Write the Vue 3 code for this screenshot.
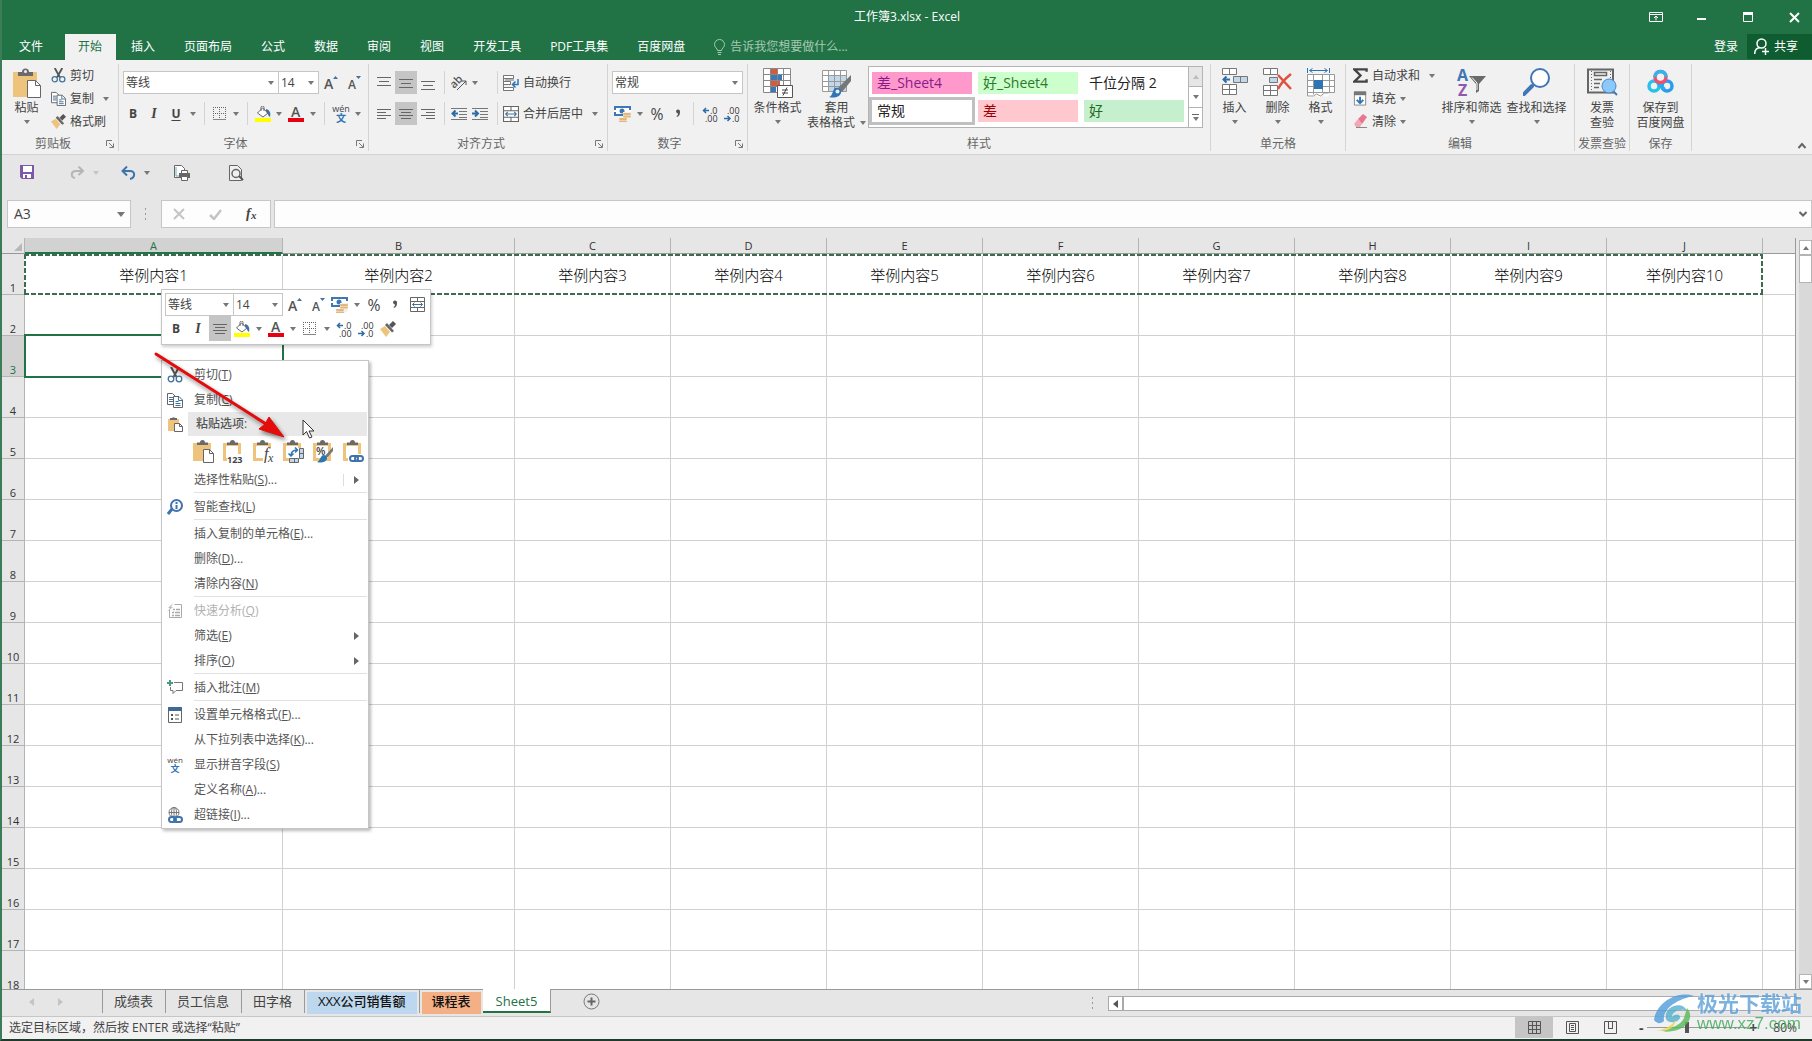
<script setup>
import { h } from 'vue'

const Ico = (props) =>
  h('svg', { width: props.w, height: props.h ?? props.w, 'aria-hidden': 'true', style: { display: 'block', flex: 'none' } }, [
    h('use', { href: '#' + props.n }),
  ])
Ico.props = ['n', 'w', 'h']

const tabs = ['文件', '开始', '插入', '页面布局', '公式', '数据', '审阅', '视图', '开发工具', 'PDF工具集', '百度网盘']
const columns = ['A', 'B', 'C', 'D', 'E', 'F', 'G', 'H', 'I', 'J']
const rows = Array.from({ length: 18 }, (_, i) => i + 1)

const styles = [
  { label: '差_Sheet4', cls: 'pink' },
  { label: '好_Sheet4', cls: 'lime' },
  { label: '千位分隔 2', cls: '' },
  { label: '常规', cls: 'current' },
  { label: '差', cls: 'bad' },
  { label: '好', cls: 'good' },
]

const menuTop = [
  { icon: 'cut', text: '剪切', key: 'T' },
  { icon: 'copy', text: '复制', key: 'C' },
]
const pasteOptions = [
  { n: 'p-all', label: '粘贴' },
  { n: 'p-val', label: '值' },
  { n: 'p-fx', label: '公式' },
  { n: 'p-trans', label: '转置' },
  { n: 'p-fmt', label: '格式' },
  { n: 'p-link', label: '粘贴链接' },
]
const menuRest = [
  { text: '选择性粘贴', key: 'S', dots: true, sub: true, split: true },
  { line: true },
  { icon: 'lookup', text: '智能查找', key: 'L' },
  { line: true },
  { text: '插入复制的单元格', key: 'E', dots: true },
  { text: '删除', key: 'D', dots: true },
  { text: '清除内容', key: 'N' },
  { line: true },
  { icon: 'quick', text: '快速分析', key: 'Q', off: true },
  { text: '筛选', key: 'E', sub: true },
  { text: '排序', key: 'O', sub: true },
  { line: true },
  { icon: 'comment', text: '插入批注', key: 'M' },
  { line: true },
  { icon: 'format', text: '设置单元格格式', key: 'F', dots: true },
  { text: '从下拉列表中选择', key: 'K', dots: true },
  { icon: 'wen', text: '显示拼音字段', key: 'S' },
  { text: '定义名称', key: 'A', dots: true },
  { icon: 'link', text: '超链接', key: 'I', dots: true },
]
</script>

<template>
  <div class="app">
    <svg class="defs" width="0" height="0" aria-hidden="true">
      <symbol id="paste" viewBox="0 0 28 30">
        <path d="M0 4h24v25H0z" fill="#eec37c" />
        <path d="M5 8V4h4a3.500 3.500 0 0 1 7 0h4v4z" fill="#6a6a6a" />
        <circle cx="12.500" cy="3.500" r="1.500" fill="#f1f1f1" />
        <path d="M14.500 12.500h8l5 5v12h-13z" fill="#fff" stroke="#666" />
        <path d="M22.500 12.500v5h5" fill="none" stroke="#666" />
      </symbol>
      <symbol id="cut" viewBox="0 0 16 16">
        <path d="M4 0l5.500 10M12 0L6.500 10" stroke="#555" stroke-width="2" fill="none" />
        <circle cx="4" cy="12" r="2.800" fill="none" stroke="#41719c" stroke-width="1.300" />
        <circle cx="12" cy="12" r="2.800" fill="none" stroke="#41719c" stroke-width="1.300" />
      </symbol>
      <symbol id="copy" viewBox="0 0 16 16">
        <path d="M.500 1.500h5l3 3v8h-8z" fill="#fff" stroke="#666" />
        <path d="M2 5.500h4M2 7.500h4M2 9.500h4" stroke="#41719c" />
        <path d="M6.500 4.500h5.500l3.500 3.500v7.500h-9z" fill="#fff" stroke="#666" />
        <path d="M11.500 4.500v4h4M8.500 9.500h3M8.500 11.500h5M8.500 13.500h5" fill="none" stroke="#41719c" />
      </symbol>
      <symbol id="brush" viewBox="0 0 16 16">
        <path d="M0 8l5-3 5 6-4 5z" fill="#eec37c" />
        <path d="M5 4l2-2 7 8-2 1.500z" fill="#666" />
        <path d="M9 4l4-4 3 3-4 4z" fill="#555" />
      </symbol>
      <symbol id="grow" viewBox="0 0 16 16">
        <text x="1" y="14" font-size="14" class="gl">A</text>
        <path d="M10 4l2.500-3L15 4z" fill="#41719c" />
      </symbol>
      <symbol id="shrink" viewBox="0 0 16 16">
        <text x="2" y="14" font-size="12" class="gl">A</text>
        <path d="M10 1h5l-2.500 3z" fill="#41719c" />
      </symbol>
      <symbol id="border" viewBox="0 0 14 14">
        <path d="M.500 0v13M6.500 0v13M12.500 0v13M0 .500h13M0 6.500h13" stroke="#666" stroke-dasharray="1 1" fill="none" />
        <path d="M0 12.500h13" stroke="#888" />
      </symbol>
      <symbol id="fill" viewBox="0 0 16 16">
        <path d="M2.500 7l5-5 5.500 5-5 4z" fill="#fff" stroke="#666" />
        <path d="M6 5V1.500a1.500 1.500 0 0 1 3 0V5" fill="none" stroke="#666" />
        <path d="M11 3c4 1 5 4 4 8-2-1-2-4-4-5z" fill="#41719c" />
        <path d="M0 12h16v4H0z" fill="#ff0" />
      </symbol>
      <symbol id="color" viewBox="0 0 16 16">
        <text x="3" y="11" font-size="14" class="gl">A</text>
        <path d="M0 12h16v4H0z" fill="#e60012" />
      </symbol>
      <symbol id="wen" viewBox="0 0 16 16">
        <text x="8" y="6" text-anchor="middle" font-size="8" fill="#444">wén</text>
        <text x="8" y="15" text-anchor="middle" font-size="9" font-weight="700" fill="#2e75b6">文</text>
      </symbol>
      <symbol id="a-top" viewBox="0 0 14 14"><path d="M0 1.500h14M2 5.500h10M0 9.500h14" stroke="#666" /></symbol>
      <symbol id="a-mid" viewBox="0 0 14 14"><path d="M0 3.500h14M2 7.500h10M0 11.500h14" stroke="#666" /></symbol>
      <symbol id="a-bot" viewBox="0 0 14 14"><path d="M0 5.500h14M2 9.500h10M0 13.500h14" stroke="#666" /></symbol>
      <symbol id="a-left" viewBox="0 0 14 14"><path d="M0 2.500h14M0 5.500h9M0 8.500h14M0 11.500h9" stroke="#666" /></symbol>
      <symbol id="a-center" viewBox="0 0 14 14"><path d="M0 2.500h14M2 5.500h10M0 8.500h14M2 11.500h10" stroke="#666" /></symbol>
      <symbol id="a-right" viewBox="0 0 14 14"><path d="M0 2.500h14M5 5.500h9M0 8.500h14M5 11.500h9" stroke="#666" /></symbol>
      <symbol id="orient" viewBox="0 0 16 16">
        <text x="0" y="11" font-size="11" font-weight="600" fill="#555" transform="rotate(-45 5 9)">ab</text>
        <path d="M6 15l9-9M15 10V6h-4" fill="none" stroke="#555" />
      </symbol>
      <symbol id="outdent" viewBox="0 0 16 14">
        <path d="M0 1.500h16M8 4.500h8M8 7.500h8M8 10.500h8M0 12.500h16" stroke="#777" />
        <path d="M7 6.500H2M4.500 3.500l-3 3 3 3" stroke="#2e6ca8" stroke-width="2" fill="none" />
      </symbol>
      <symbol id="indent" viewBox="0 0 16 14">
        <path d="M0 1.500h16M8 4.500h8M8 7.500h8M8 10.500h8M0 12.500h16" stroke="#777" />
        <path d="M0 6.500h5M3 3.500l3 3-3 3" stroke="#2e6ca8" stroke-width="2" fill="none" />
      </symbol>
      <symbol id="wrap" viewBox="0 0 16 16">
        <path d="M.500.500h10v3H.500zM.500 6.500h7v3h-7zM.500 12.500h10v3H.500z" fill="#fff" stroke="#777" />
        <path d="M.500.500v15M2 5h9" stroke="#777" fill="none" />
        <path d="M15 4v5.500H10M12.500 6.500l-3 3 3 3" stroke="#2e75b6" fill="none" stroke-width="1.500" />
      </symbol>
      <symbol id="merge" viewBox="0 0 15 15">
        <path d="M.500.500h14v14H.500zM.500 4.500h14M.500 10.500h14M7.500.500v4M7.500 10.500v4" fill="#fff" stroke="#666" />
        <path d="M2.500 7.500h10M4.500 5.500l-2 2 2 2M10.500 5.500l2 2-2 2" stroke="#41719c" fill="none" />
      </symbol>
      <symbol id="money" viewBox="0 0 18 16">
        <path d="M1 1h15v8H1z" fill="#fff" stroke="#3f77b5" stroke-width="2" />
        <path d="M0 4h2v2H0zM15 4h2v2h-2z" fill="#fff" />
        <circle cx="8" cy="5" r="2.500" fill="#3f77b5" />
        <path d="M9 6h8v8l-4 2H5v-4h4z" fill="#f1f1f1" />
        <path d="M10 8h6M10 10.500h6M6 13h6M6 15.500h6" stroke="#e3b77c" stroke-width="2" stroke-linecap="round" />
      </symbol>
      <symbol id="pct" viewBox="0 0 16 16"><text x="8" y="13" text-anchor="middle" font-size="14" fill="#444">%</text></symbol>
      <symbol id="comma" viewBox="0 0 16 16"><path d="M6 5a2 2 0 1 1 4 1c0 3-1 4-3 5l-.500-1c1-.500 1.500-1 1.500-2.500C7 7.500 6 6.500 6 5z" fill="#555" /></symbol>
      <symbol id="dec-inc" viewBox="0 0 16 16">
        <path d="M7 4.500H1.500M4 2L1.500 4.500 4 7" stroke="#2e6ca8" stroke-width="1.500" fill="none" />
        <text x="8" y="8" font-size="9" fill="#333">.0</text>
        <text x="3" y="16" font-size="9" fill="#333">.00</text>
      </symbol>
      <symbol id="dec-dec" viewBox="0 0 16 16">
        <text x="3" y="8" font-size="9" fill="#333">.00</text>
        <path d="M0 12.500h6M3.500 10L6 12.500 3.500 15" stroke="#2e6ca8" stroke-width="1.500" fill="none" />
        <text x="8" y="16" font-size="9" fill="#333">.0</text>
      </symbol>
      <symbol id="cond" viewBox="0 0 30 30">
        <path d="M.500.500h27v24H.500z" fill="#fff" />
        <path d="M8 1h6v5H8zM8 13h9v6H8z" fill="#d9593d" />
        <path d="M8 7h11v5H8zM8 19h5v6H8z" fill="#3c78b4" />
        <path d="M.500.500h27v24H.500zM.500 6.500h27M.500 12.500h27M.500 18.500h27M7.500.500v24M14.500.500v24M20.500.500v24" fill="none" stroke="#888" />
        <path d="M14.500 17.500h15v12h-15z" fill="#fff" stroke="#555" />
        <path d="M19 22h6M19 25h6M24 19.500l-4 8" stroke="#444" />
      </symbol>
      <symbol id="tablefmt" viewBox="0 0 30 30">
        <path d="M.500 2.500h24v21H.500z" fill="#fff" />
        <path d="M6 8h19v16H6z" fill="#c3d7ea" />
        <path d="M.500 2.500h24v21H.500zM.500 7.500h24M.500 13.500h24M.500 18.500h24M6.500 2.500v21M12.500 2.500v21M18.500 2.500v21" fill="none" stroke="#999" />
        <path d="M29 7v6l-9 11-4-4z" fill="#777" />
        <path d="M13 20c4-1 7 2 6 5-2 5-8 5-12 4 4-1 3-6 6-9z" fill="#2e75b6" />
        <circle cx="15.500" cy="23.500" r="2" fill="#e8f1f9" />
      </symbol>
      <symbol id="ins" viewBox="0 0 28 28">
        <path d="M1.500.500h14v6h-14zM8.500.500v6M1.500 16.500h14v10h-14zM8.500 16.500v10M1.500 21.500h14" fill="#fff" stroke="#777" />
        <path d="M12.500 8.500h14v6h-14z" fill="#c3d7ea" stroke="#777" /><path d="M19.500 8.500v6" stroke="#777" />
        <path d="M9 11.500H3M5.500 8.500l-3 3 3 3" stroke="#2e6ca8" stroke-width="2" fill="none" />
      </symbol>
      <symbol id="del" viewBox="0 0 30 28">
        <path d="M.500.500h14v6H.500zM7.500.500v6M.500 17.500h14v10H.500zM7.500 17.500v10M.500 22.500h14" fill="#fff" stroke="#777" />
        <path d="M6.500 9.500h8v5h-8z" fill="#c3d7ea" stroke="#777" />
        <path d="M15 7l13 14M28 6C23 10 18 15 15 21" stroke="#e0523f" stroke-width="2.500" fill="none" />
      </symbol>
      <symbol id="fmt" viewBox="0 0 28 30">
        <path d="M.500 0v5M22.500 0v5M3 2.500h17M5.500.500l-3 2 3 2M17.500.500l3 2-3 2" stroke="#2e75b6" fill="none" />
        <path d="M.500 6.500h27v18H23l-2 4h-4l-1-2-3 3-4-2-4 2H.500z" fill="#fff" />
        <path d="M6.500 6.500v20M15.500 6.500v18M22.500 6.500v18M.500 12.500h27M.500 18.500h27M.500 24.500h27M.500 6.500h27v18M.500 6.500V28h6l3-2 4 2 4-3h4" fill="none" stroke="#999" />
        <path d="M7 12h9v9H7z" fill="#2e75b6" />
      </symbol>
      <symbol id="sigma" viewBox="0 0 16 16"><path d="M14.500 4V1.500h-13L8 8l-6.500 6.500h13V12" fill="none" stroke="#444" stroke-width="2.500" /></symbol>
      <symbol id="filldn" viewBox="0 0 15 16">
        <path d="M1 1h12v14H1z" fill="#fff" stroke="#888" /><path d="M.500.500h13v4H.500z" fill="#777" />
        <path d="M7 6v7M3.500 9.500L7 13l3.500-3.500" stroke="#2e75b6" stroke-width="2" fill="none" />
      </symbol>
      <symbol id="eraser" viewBox="0 0 15 15">
        <path d="M5 5l5-5 4 3-5 7z" fill="#e8768d" /><path d="M5 5l4 5-2 3H3L1 10z" fill="#f3a7b6" /><path d="M3 13.500h11" stroke="#888" />
      </symbol>
      <symbol id="sort" viewBox="0 0 30 30">
        <text x="0" y="13" font-size="16" font-weight="700" fill="#3f77b5">A</text>
        <text x="1" y="28" font-size="16" font-weight="700" fill="#9157b0">Z</text>
        <path d="M12 8h17l-7 8v7l-3 2v-9z" fill="#6a6a6a" /><path d="M15 9.500l5 5.500v7" fill="none" stroke="#fff" />
      </symbol>
      <symbol id="find" viewBox="0 0 28 28">
        <path d="M9 18l-8 8" stroke="#3f77b5" stroke-width="4" stroke-linecap="round" />
        <circle cx="17" cy="10" r="9" fill="#fff" stroke="#3f77b5" stroke-width="2" />
      </symbol>
      <symbol id="invoice" viewBox="0 0 31 28">
        <path d="M1 1.500h25v23H1z" fill="#f1f1f1" stroke="#666" stroke-width="2" />
        <path d="M4.500 3v20M23.500 3v14" stroke="#666" stroke-dasharray="1 2" />
        <path d="M7.500 4.500h12v3h-12zM7 11.500h8M7 15.500h6M7 19.500h5" fill="none" stroke="#666" stroke-width="1.500" />
        <path d="M26 23l4 4" stroke="#3f77b5" stroke-width="2" /><circle cx="22" cy="18" r="7" fill="#8cc8fa" stroke="#4a88c7" />
      </symbol>
      <symbol id="baidu" viewBox="0 0 28 26">
        <g fill="none" stroke-width="3.500">
          <circle cx="7" cy="18" r="5" stroke="#27c1ea" /><circle cx="20" cy="18" r="5" stroke="#279df0" />
          <path d="M10.500 14.500l7 7" stroke="#27aeea" /><circle cx="13.500" cy="9" r="5.500" stroke="#f0506e" />
          <path d="M8 9a5.500 5.500 0 0 1 11 0" stroke="#2fb6ee" />
        </g>
      </symbol>
      <symbol id="save" viewBox="0 0 15 15">
        <path d="M0 0h14v14H2l-2-2z" fill="#7d57a8" /><path d="M3 1h9v6H3zM3 9h8v4H3z" fill="#fff" /><path d="M5 10h2v3H5z" fill="#7d57a8" />
      </symbol>
      <symbol id="undo" viewBox="0 0 15 14"><path d="M1 5h8c6 0 5 7 0 8M6 .500L1.500 5 6 9.500" fill="none" stroke="#3f73ad" stroke-width="2" /></symbol>
      <symbol id="redo" viewBox="0 0 15 14"><path d="M13 5H6C0 5 1 12 5 12M8.500.500L13 5 8.500 9" fill="none" stroke="#b5b5b5" stroke-width="2" /></symbol>
      <symbol id="qprint" viewBox="0 0 17 16">
        <path d="M.500.500h7l3 3v9h-10z" fill="#fff" stroke="#666" /><path d="M2 2v9h3" stroke="#7ab" fill="none" />
        <path d="M5 8h11v5H5z" fill="#666" /><path d="M7.500 5.500h6v3h-6zM7.500 11.500h6v4h-6z" fill="#fff" stroke="#666" />
      </symbol>
      <symbol id="preview" viewBox="0 0 15 16">
        <path d="M.500.500h8l4 4v11h-12z" fill="#f1f1f1" stroke="#666" /><circle cx="7" cy="8.500" r="4" fill="none" stroke="#666" stroke-width="1.500" /><path d="M10 11l4 4" stroke="#555" stroke-width="2" />
      </symbol>
      <symbol id="launch" viewBox="0 0 8 8"><path d="M.500 6V.500H6M3 3l4 4M7.500 3.500v4h-4" fill="none" stroke="#777" /></symbol>
      <symbol id="bulb" viewBox="0 0 11 16"><path d="M3.500 11.500c0-2-3-3-3-6a5 5 0 0 1 10 0c0 3-3 4-3 6zM3.500 13.500h4M4 15.500h3" fill="none" stroke="#a5c9b3" /></symbol>
      <symbol id="share" viewBox="0 0 16 17"><circle cx="7.500" cy="5.500" r="4.500" fill="none" stroke="#fff" stroke-width="1.500" /><path d="M.700 16c0-4 2-6 5-6.500M8 13.500h7M11.500 10v7" fill="none" stroke="#fff" stroke-width="1.500" /></symbol>
      <symbol id="w-opt" viewBox="0 0 14 10"><path d="M.500.500h13v9H.500zM.500 2.500h13M7 8.500V4M5 6l2-2 2 2" fill="none" stroke="#fff" /></symbol>
      <symbol id="w-min" viewBox="0 0 10 10"><path d="M0 6h9v2H0z" fill="#fff" /></symbol>
      <symbol id="w-max" viewBox="0 0 11 11"><path d="M.500.500h9v9h-9z" fill="none" stroke="#fff" /><path d="M0 0h10v3H0z" fill="#fff" /></symbol>
      <symbol id="w-close" viewBox="0 0 11 11"><path d="M1 1l9 9M10 1l-9 9" stroke="#fff" stroke-width="2" /></symbol>
      <symbol id="chev-up" viewBox="0 0 10 7"><path d="M1.500 6L5 2l3.500 4" fill="none" stroke="#666" stroke-width="2" /></symbol>
      <symbol id="chev-dn" viewBox="0 0 8 6"><path d="M.500 1L4 4.500 7.500 1" fill="none" stroke="#666" stroke-width="2" /></symbol>
      <symbol id="x" viewBox="0 0 12 12"><path d="M1 1l10 10M11 1L1 11" stroke="#c4c4c4" stroke-width="2" /></symbol>
      <symbol id="check" viewBox="0 0 13 11"><path d="M1 6l4 4 7-9" fill="none" stroke="#c4c4c4" stroke-width="2.500" /></symbol>
      <symbol id="fx" viewBox="0 0 14 14"><text x="1" y="11" font-size="14" class="fxt">f</text><text x="6" y="12" font-size="11" class="fxt">x</text></symbol>

      <symbol id="clip" viewBox="0 0 22 23">
        <path d="M1.500 4.500h15v15h-15z" fill="#fff" stroke="#eec37c" stroke-width="3" />
        <path d="M4 5V2.500h3a2.500 2.500 0 0 1 5 0h3V5z" fill="#6a6a6a" />
      </symbol>
      <symbol id="p-small" viewBox="0 0 16 16">
        <path d="M1 3h11v12H1z" fill="#eec37c" /><path d="M3 4V2h2a2 2 0 0 1 3 0h2v2z" fill="#6a6a6a" />
        <path d="M7.500 7.500h5l3 3v5h-8z" fill="#fff" stroke="#666" /><path d="M12.500 7.500v3h3" fill="none" stroke="#666" />
      </symbol>
      <symbol id="p-all" viewBox="0 0 22 23">
        <path d="M0 3h18v18H0z" fill="#eec37c" /><path d="M4 5V2.500h3a2.500 2.500 0 0 1 5 0h3V5z" fill="#6a6a6a" />
        <path d="M10.500 9.500h6l4 4v9h-10z" fill="#fff" stroke="#666" /><path d="M16.500 9.500v4h4" fill="none" stroke="#666" />
      </symbol>
      <symbol id="p-val" viewBox="0 0 22 23">
        <use href="#clip" width="22" height="23" /><path d="M4 14h18v9H4z" fill="#fff" />
        <text x="4" y="23" font-size="9" font-weight="700" fill="#444">123</text>
      </symbol>
      <symbol id="p-fx" viewBox="0 0 22 23">
        <use href="#clip" width="22" height="23" /><path d="M10 8h12v15H10z" fill="#fff" />
        <text x="11" y="19" font-size="16" class="fxt thin">f</text><text x="15" y="22" font-size="12" class="fxt thin">x</text>
      </symbol>
      <symbol id="p-trans" viewBox="0 0 22 23">
        <use href="#clip" width="22" height="23" /><path d="M7 8h15v15H7z" fill="#fff" />
        <path d="M16.500 8.500h4v10h-4zM16.500 13.500h4M6.500 18.500h9v4h-9zM11.500 18.500v4" fill="#c3d7ea" stroke="#666" />
        <path d="M8 16c0-4 2-6 6-6M12 7.500l2.500 2.500-2.500 2.500M5.500 13.500L8 16l2.500-2.500" fill="none" stroke="#2e75b6" stroke-width="1.500" />
      </symbol>
      <symbol id="p-fmt" viewBox="0 0 22 23">
        <use href="#clip" width="22" height="23" /><text x="3" y="15" font-size="11" font-weight="600" fill="#444">%</text>
        <path d="M20 7v4l-7 8-2-2z" fill="#777" /><path d="M10 15c3 0 4 2 4 4-2 4-6 4-10 3 3-1 3-5 6-7z" fill="#2e75b6" />
      </symbol>
      <symbol id="p-link" viewBox="0 0 22 23">
        <use href="#clip" width="22" height="23" /><path d="M5 14h17v9H5z" fill="#fff" />
        <g fill="none" stroke="#3f73ad" stroke-width="2"><rect x="7" y="16" width="8" height="5" rx="2.500" /><rect x="12" y="16" width="8" height="5" rx="2.500" /></g>
      </symbol>
      <symbol id="lookup" viewBox="0 0 16 16">
        <path d="M5 10l-4 5" stroke="#3f73ad" stroke-width="3" /><circle cx="9.500" cy="6.500" r="5.500" fill="#fff" stroke="#3f73ad" stroke-width="2" /><path d="M9.500 3v2M9.500 6v4" stroke="#3f73ad" stroke-width="2" />
      </symbol>
      <symbol id="quick" viewBox="0 0 16 16">
        <path d="M2.500 7v7.500h12v-13h-7" fill="none" stroke="#aaa" /><path d="M6 6.500h2M9 6.500h4M5 9.500h2M8 9.500h5M5 12.500h2M8 12.500h5" stroke="#aaa" stroke-width="1.500" /><path d="M6 0L1 5h2L0 9l6-5H4z" fill="#bbb" />
      </symbol>
      <symbol id="comment" viewBox="0 0 16 16">
        <path d="M7 2.500h8.500v8H9l-3 3v-3H3.500V7" fill="none" stroke="#777" /><path d="M3 0v6M0 3h6" stroke="#4a9a7c" stroke-width="2" />
      </symbol>
      <symbol id="format" viewBox="0 0 16 16">
        <path d="M1.500.500h13v15h-13z" fill="#fff" stroke="#666" /><path d="M1 0h14v4H1z" fill="#3f6a98" />
        <path d="M4 7h2v2H4zM4 11h2v2H4z" fill="#555" /><path d="M8 8h4M8 12h4" stroke="#555" />
      </symbol>
      <symbol id="link" viewBox="0 0 16 16">
        <g fill="none" stroke="#777"><circle cx="7" cy="5.500" r="5" /><path d="M2 5.500h10M7 .500v10" /><ellipse cx="7" cy="5.500" rx="2.500" ry="5" /></g>
        <path d="M1 9h15v7H1z" fill="#fff" />
        <g fill="none" stroke="#3f73ad" stroke-width="2"><rect x="2" y="10" width="7" height="5" rx="2.500" /><rect x="7" y="10" width="8" height="5" rx="2.500" /></g>
      </symbol>
      <symbol id="v-grid" viewBox="0 0 13 13"><path d="M.500.500h12v12H.500zM.500 4.500h12M.500 8.500h12M4.500.500v12M8.500.500v12" fill="none" stroke="#555" /></symbol>
      <symbol id="v-page" viewBox="0 0 13 13"><path d="M.500.500h12v12H.500zM3.500 2.500h6v8h-6zM5 4.500h3M5 6.500h3M5 8.500h3" fill="none" stroke="#555" /></symbol>
      <symbol id="v-break" viewBox="0 0 13 13"><path d="M.500.500h12v12H.500zM4.500.500v7M8.500.500v7M4 7.500h5" fill="none" stroke="#555" /></symbol>
      <symbol id="plus" viewBox="0 0 17 17"><circle cx="8.500" cy="8.500" r="7.500" fill="none" stroke="#777" /><path d="M8.500 4.500v8M4.500 8.500h8" stroke="#666" stroke-width="2" /></symbol>
    </svg>

    <header class="title">
      <div class="caption">
        <span></span>
        <h1>工作簿3.xlsx - Excel</h1>
        <div class="win">
          <button aria-label="功能区显示选项"><Ico n="w-opt" w="14" h="10" /></button>
          <button aria-label="最小化"><Ico n="w-min" w="10" /></button>
          <button aria-label="最大化"><Ico n="w-max" w="11" /></button>
          <button aria-label="关闭"><Ico n="w-close" w="11" /></button>
        </div>
      </div>
      <nav class="tabs">
        <button v-for="t in tabs" :key="t" :class="{ on: t === '开始', file: t === '文件' }">{{ t }}</button>
        <label class="tell"><Ico n="bulb" w="11" h="16" /><input type="text" placeholder="告诉我您想要做什么..." /></label>
        <button class="login">登录</button>
        <button class="share"><Ico n="share" w="16" h="17" />共享</button>
      </nav>
    </header>

    <section class="ribbon">
      <div class="group g-clip">
        <div class="body">
          <button class="big w49"><span class="pic"><Ico n="paste" w="28" h="30" /></span>粘贴<i class="caret"></i></button>
          <div class="stack">
            <button><Ico n="cut" w="15" />剪切</button>
            <button><Ico n="copy" w="15" />复制<i class="caret far"></i></button>
            <button><Ico n="brush" w="15" />格式刷</button>
          </div>
        </div>
        <div class="name"><span>剪贴板</span><button aria-label="剪贴板设置"><Ico n="launch" w="8" /></button></div>
      </div>

      <div class="group g-font">
        <div class="body col">
          <div class="line">
            <span class="combo c-font"><select aria-label="字体"><option>等线</option></select><i class="caret"></i></span>
            <span class="combo c-size"><select aria-label="字号"><option>14</option></select><i class="caret"></i></span>
            <button class="b24"><Ico n="grow" w="16" /></button>
            <button class="b22"><Ico n="shrink" w="16" /></button>
          </div>
          <div class="line">
            <button class="b20 bold">B</button><button class="b22 ital">I</button><button class="b22 under">U</button><button class="drop"><i class="caret"></i></button>
            <i class="bar"></i>
            <button class="b20"><Ico n="border" w="14" /></button><button class="drop"><i class="caret"></i></button>
            <i class="bar"></i>
            <button class="b20"><Ico n="fill" w="16" /></button><button class="drop"><i class="caret"></i></button>
            <button class="b22"><Ico n="color" w="16" /></button><button class="drop"><i class="caret"></i></button>
            <i class="bar"></i>
            <button class="b22"><Ico n="wen" w="18" h="18" /></button><button class="drop"><i class="caret"></i></button>
          </div>
        </div>
        <div class="name"><span>字体</span><button aria-label="字体设置"><Ico n="launch" w="8" /></button></div>
      </div>

      <div class="group g-align">
        <div class="body col">
          <div class="line">
            <button class="b22"><Ico n="a-top" w="14" /></button><button class="b22 sel"><Ico n="a-mid" w="14" /></button><button class="b22"><Ico n="a-bot" w="14" /></button>
            <i class="bar"></i>
            <span class="pair"><button class="b20"><Ico n="orient" w="16" /></button><button class="drop"><i class="caret"></i></button></span>
            <i class="bar"></i>
            <button class="wide"><Ico n="wrap" w="16" />自动换行</button>
          </div>
          <div class="line">
            <button class="b22"><Ico n="a-left" w="14" /></button><button class="b22 sel"><Ico n="a-center" w="14" /></button><button class="b22"><Ico n="a-right" w="14" /></button>
            <i class="bar"></i>
            <span class="pair"><button class="b20"><Ico n="outdent" w="16" h="14" /></button><button class="b22"><Ico n="indent" w="16" h="14" /></button></span>
            <i class="bar"></i>
            <button class="wide"><Ico n="merge" w="16" />合并后居中<i class="caret far"></i></button>
          </div>
        </div>
        <div class="name"><span>对齐方式</span><button aria-label="对齐设置"><Ico n="launch" w="8" /></button></div>
      </div>

      <div class="group g-num">
        <div class="body col">
          <div class="line"><span class="combo c-num"><select aria-label="数字格式"><option>常规</option></select><i class="caret"></i></span></div>
          <div class="line">
            <button class="b22"><Ico n="money" w="18" h="16" /></button><button class="drop"><i class="caret"></i></button>
            <button class="b22"><Ico n="pct" w="18" /></button><button class="b20"><Ico n="comma" w="16" /></button>
            <i class="bar"></i>
            <button class="b22"><Ico n="dec-inc" w="16" /></button><button class="b22"><Ico n="dec-dec" w="16" /></button>
          </div>
        </div>
        <div class="name"><span>数字</span><button aria-label="数字设置"><Ico n="launch" w="8" /></button></div>
      </div>

      <div class="group g-style">
        <div class="body">
          <button class="big w59"><span class="pic"><Ico n="cond" w="30" /></span>条件格式<i class="caret"></i></button>
          <button class="big w59"><span class="pic"><Ico n="tablefmt" w="30" /></span>套用<span class="inl">表格格式<i class="caret"></i></span></button>
          <div class="gallery">
            <div class="cells"><button v-for="s in styles" :key="s.label" :class="s.cls">{{ s.label }}</button></div>
            <div class="gscroll">
              <button class="off" aria-label="上一行"><i class="caret up"></i></button>
              <button aria-label="下一行"><i class="caret"></i></button>
              <button aria-label="其他"><i class="more"></i><i class="caret"></i></button>
            </div>
          </div>
        </div>
        <div class="name"><span>样式</span></div>
      </div>

      <div class="group g-cells">
        <div class="body">
          <button class="big w43"><span class="pic"><Ico n="ins" w="28" /></span>插入<i class="caret"></i></button>
          <button class="big w43"><span class="pic"><Ico n="del" w="30" h="28" /></span>删除<i class="caret"></i></button>
          <button class="big w43"><span class="pic"><Ico n="fmt" w="28" h="30" /></span>格式<i class="caret"></i></button>
        </div>
        <div class="name"><span>单元格</span></div>
      </div>

      <div class="group g-edit">
        <div class="body">
          <div class="stack">
            <button><Ico n="sigma" w="15" />自动求和<i class="caret far"></i></button>
            <button><Ico n="filldn" w="15" />填充<i class="caret"></i></button>
            <button><Ico n="eraser" w="15" />清除<i class="caret"></i></button>
          </div>
          <button class="big w65"><span class="pic"><Ico n="sort" w="30" /></span>排序和筛选<i class="caret"></i></button>
          <button class="big w65"><span class="pic"><Ico n="find" w="28" /></span>查找和选择<i class="caret"></i></button>
        </div>
        <div class="name"><span>编辑</span></div>
      </div>

      <div class="group g-inv">
        <div class="body"><button class="big fill"><span class="pic"><Ico n="invoice" w="31" h="28" /></span>发票<span>查验</span></button></div>
        <div class="name"><span>发票查验</span></div>
      </div>
      <div class="group g-save">
        <div class="body"><button class="big fill"><span class="pic"><Ico n="baidu" w="28" h="26" /></span>保存到<span>百度网盘</span></button></div>
        <div class="name"><span>保存</span></div>
      </div>
      <button class="collapse" aria-label="折叠功能区"><Ico n="chev-up" w="10" h="7" /></button>
    </section>

    <div class="quick">
      <button aria-label="保存"><Ico n="save" w="15" /></button>
      <span><button aria-label="恢复"><Ico n="redo" w="15" h="14" /></button><i class="caret pale"></i></span>
      <span><button aria-label="撤消"><Ico n="undo" w="15" h="14" /></button><i class="caret"></i></span>
      <button aria-label="快速打印"><Ico n="qprint" w="17" h="16" /></button>
      <button aria-label="打印预览"><Ico n="preview" w="15" h="16" /></button>
    </div>

    <div class="formula">
      <label class="namebox"><input type="text" value="A3" aria-label="名称框" /><i class="caret big5"></i></label>
      <i class="dots"></i>
      <div class="fxbox">
        <button aria-label="取消"><Ico n="x" w="12" /></button>
        <button aria-label="输入"><Ico n="check" w="13" h="11" /></button>
        <button aria-label="插入函数"><Ico n="fx" w="14" /></button>
      </div>
      <label class="fbar"><input type="text" aria-label="编辑栏" /><Ico n="chev-dn" w="8" h="6" /></label>
    </div>

    <main class="sheet">
      <div class="grid">
        <table>
          <colgroup>
            <col class="k-num" /><col class="k-a" /><col class="k-b" /><col v-for="n in 8" :key="n" class="k-c" /><col />
          </colgroup>
          <thead>
            <tr>
              <th class="corner"><i></i></th>
              <th v-for="c in columns" :key="c" :class="{ act: c === 'A' }">{{ c }}</th>
              <th class="tail"></th>
            </tr>
          </thead>
          <tbody>
            <tr v-for="r in rows" :key="r">
              <th :class="{ act: r === 3 }">{{ r }}</th>
              <td v-for="(c, i) in columns" :key="c">{{ r === 1 ? '举例内容' + (i + 1) : '' }}</td>
              <td></td>
            </tr>
          </tbody>
        </table>
        <div class="ants"></div>
        <div class="picked"></div>
      </div>
      <div class="vscroll">
        <button aria-label="向上滚动"><i class="caret up"></i></button>
        <div class="track"><div class="thumb"></div></div>
        <button aria-label="向下滚动"><i class="caret"></i></button>
      </div>
    </main>

    <div class="sheets">
      <div class="arrows"><i class="tri left"></i><i class="tri right"></i></div>
      <button>成绩表</button><button>员工信息</button><button>田字格</button>
      <button class="hl"><span class="blue">XXX公司销售额</span></button>
      <button class="hl"><span class="orange">课程表</span></button>
      <button class="open">Sheet5</button>
      <button class="add" aria-label="新工作表"><Ico n="plus" w="17" /></button>
      <i class="dots"></i>
      <div class="hscroll"><button aria-label="向左滚动"><i class="tri left dark"></i></button><div></div></div>
    </div>

    <footer class="status">
      <span>选定目标区域，然后按 ENTER 或选择“粘贴”</span>
      <div class="views">
        <button class="sel" aria-label="普通"><Ico n="v-grid" w="13" /></button>
        <button aria-label="页面布局"><Ico n="v-page" w="13" /></button>
        <button aria-label="分页预览"><Ico n="v-break" w="13" /></button>
      </div>
      <div class="zoom">
        <button aria-label="缩小">-</button><input type="range" min="10" max="190" value="80" aria-label="缩放" /><button aria-label="放大">+</button>
        <span>80%</span>
      </div>
    </footer>

    <div class="mark">
      <svg width="42" height="40" viewBox="0 0 42 40" aria-hidden="true">
        <path d="M41 3C24-3 3 10 1 27c3 4 7 4 10 1C9 16 24 6 41 3z" fill="#4f9ddc" />
        <path d="M13 26c-3-13 17-19 21-8-5-3-15 0-15 6 3-4 9-3 8 1-2 5-12 6-14 1z" fill="#55b0d0" />
        <path d="M34 15c8 9 0 21-14 23-6 1-9 1-12-1 10-1 20-5 23-12 1-4 2-6 3-10z" fill="#57b957" />
        <path d="M4 38c9-2 15-6 19-11-1 6-6 12-19 11z" fill="#f1d549" />
      </svg>
      <div><b>极光下载站</b><em>www.xz7.com</em></div>
    </div>

    <div class="mini">
      <div class="line">
        <span class="combo m-font"><select aria-label="浮动字体"><option>等线</option></select><i class="caret"></i></span>
        <span class="combo m-size"><select aria-label="浮动字号"><option>14</option></select><i class="caret"></i></span>
        <button class="b24"><Ico n="grow" w="16" /></button><button class="b22"><Ico n="shrink" w="16" /></button>
        <button class="b22"><Ico n="money" w="18" h="16" /></button><button class="drop"><i class="caret"></i></button>
        <button class="b22"><Ico n="pct" w="18" /></button><button class="b20"><Ico n="comma" w="16" /></button>
        <button class="b24"><Ico n="merge" w="15" /></button>
      </div>
      <div class="line">
        <button class="b22 bold">B</button><button class="b22 ital">I</button><button class="b22 sel"><Ico n="a-center" w="14" /></button>
        <button class="b22"><Ico n="fill" w="16" /></button><button class="drop"><i class="caret"></i></button>
        <button class="b22"><Ico n="color" w="16" /></button><button class="drop"><i class="caret"></i></button>
        <button class="b22"><Ico n="border" w="14" /></button><button class="drop"><i class="caret"></i></button>
        <button class="b22"><Ico n="dec-inc" w="16" /></button><button class="b22"><Ico n="dec-dec" w="16" /></button>
        <button class="b22"><Ico n="brush" w="16" /></button>
      </div>
    </div>

    <div class="menu">
      <button v-for="m in menuTop" :key="m.key" class="item">
        <span class="gut"><Ico :n="m.icon" w="16" /></span><span>{{ m.text }}(<u>{{ m.key }}</u>)</span>
      </button>
      <div class="item head"><span class="gut"><Ico n="p-small" w="16" /></span><strong>粘贴选项:</strong></div>
      <div class="pastes">
        <button v-for="p in pasteOptions" :key="p.n" :aria-label="p.label"><Ico :n="p.n" w="22" h="23" /></button>
      </div>
      <template v-for="(m, i) in menuRest" :key="i">
        <hr v-if="m.line" />
        <button v-else class="item" :class="{ off: m.off }">
          <span class="gut"><Ico v-if="m.icon" :n="m.icon" w="16" /></span>
          <span>{{ m.text }}(<u>{{ m.key }}</u>){{ m.dots ? '...' : '' }}</span>
          <span v-if="m.sub" class="sub" :class="{ split: m.split }"><i class="tri right dark"></i></span>
        </button>
      </template>
    </div>

    <svg class="arrow" width="140" height="96" viewBox="0 0 140 96" aria-hidden="true">
      <path d="M6 7L116 77" stroke="#e30b0b" stroke-width="3" stroke-linecap="round" />
      <path d="M134 90l-25-8 6-5 4-7z" fill="#e30b0b" stroke="#e30b0b" stroke-linejoin="round" />
    </svg>
    <svg class="cursor" width="14" height="20" viewBox="0 0 14 20" aria-hidden="true">
      <path d="M1 1v15l3.500-3.500L7.500 19l2.500-1-3-6h5z" fill="#fff" stroke="#333" />
    </svg>
  </div>
</template>

<style>
html, body { background: #e6e6e6; overflow: hidden; }
</style>

<style scoped>
.app {
  position: relative; box-sizing: border-box; height: 100vh; overflow: hidden;
  display: flex; flex-direction: column;
  border-left: 2px solid #3a7d58; border-bottom: 2px solid #1d3a2a;
  background: #e6e6e6; color: #444;
  font: 12px/16px "Open Sans", "Noto Sans CJK SC", sans-serif;
}
.app *, .app *::before { box-sizing: border-box; }
.defs { display: none; }
button { border: 0; padding: 0; margin: 0; background: none; color: inherit; font: inherit; display: flex; align-items: center; white-space: nowrap; }
input { border: 0; padding: 0; margin: 0; background: none; color: inherit; font: inherit; min-width: 0; outline: 0; }
.gl { fill: #555; font-weight: 600; }
.fxt { font-family: "Liberation Serif", serif; font-style: italic; font-weight: 700; fill: #444; }
.fxt.thin { font-weight: 400; }

.caret { border: 3px solid transparent; border-top: 4px solid #777; border-bottom: 0; width: 6px; height: 4px; flex: none; display: block; }
.caret.up { border-top: 0; border-bottom: 4px solid #777; }
.caret.pale { border-top-color: #c4c4c4; }
.caret.big5 { border-width: 5px 4px 0; width: 8px; height: 5px; }
.caret.far { margin-left: auto; }
.tri { border: 4px solid transparent; height: 8px; width: 5px; display: block; }
.tri.left { border-left: 0; border-right: 5px solid #c4c4c4; }
.tri.right { border-right: 0; border-left: 5px solid #c4c4c4; }
.tri.left.dark { border-right-color: #555; }
.tri.right.dark { border-left-color: #666; }
.dots { width: 1px; height: 13px; background: repeating-linear-gradient(#999 0 2px, transparent 2px 5px); }

.title { flex: none; background: #217346; color: #fff; }
.caption { display: grid; grid-template-columns: 1fr auto 1fr; align-items: center; height: 34px; }
.caption h1 { margin: 0; font: inherit; }
.win { display: flex; justify-content: flex-end; }
.win button { width: 46px; height: 30px; justify-content: center; }
.win button:last-child { width: 36px; margin-left: 5px; }
.tabs { display: flex; height: 26px; }
.tabs button { padding: 0 14px 0 15px; }
.tabs .file { padding: 0 22px 0 17px; }
.tabs .on { background: #f1f1f1; color: #217346; padding: 0 14px 0 13px; }
.tell { display: flex; align-items: center; gap: 5px; margin-left: 15px; color: #a5c9b3; }
.tell input { width: 140px; }
.tell input::placeholder { color: #a5c9b3; opacity: 1; }
.tabs .login { margin-left: auto; padding: 0 9px; }
.tabs .share { background: #0e5c2f; padding: 0 14px 0 7px; gap: 4px; height: 25px; }

.ribbon { flex: none; display: flex; align-items: flex-start; background: #f1f1f1; border-bottom: 1px solid #d2d2d2; height: 95px; padding-top: 4px; }
.group { flex: none; height: 87px; border-right: 1px solid #d4d4d4; display: flex; flex-direction: column; }
.body { height: 73px; display: flex; }
.body.col { flex-direction: column; padding: 7px 0 0 4px; gap: 8px; }
.name { height: 14px; line-height: 14px; display: flex; color: #666; }
.name span { flex: 1; text-align: center; }
.name button { width: 12px; margin-left: -12px; }
.g-clip { width: 117px; }
.g-clip .name, .g-font .name, .g-align .name, .g-num .name { padding-left: 0; }
.g-clip .name span, .g-align .name span { padding-right: 14px; }
.g-font .name span, .g-num .name span { padding-right: 16px; }
.g-font { width: 250px; }
.g-align { width: 239px; }
.g-num { width: 140px; }
.g-style { width: 463px; }
.g-cells { width: 135px; }
.g-cells .body { padding-left: 2px; }
.g-edit { width: 229px; }
.g-edit .body { padding-left: 7px; }
.g-inv { width: 55px; }
.g-save { width: 62px; }
.big { flex-direction: column; line-height: 15px; height: 72px; }
.big .pic { height: 36px; padding-top: 4px; flex: none; }
.big > .caret { margin-top: 5px; }
.big.w49 { width: 49px; }
.big.w59 { width: 59px; }
.big.w43 { width: 43px; }
.big.w65 { width: 65px; }
.big.fill { width: 100%; }
.inl { display: flex; align-items: center; gap: 5px; }
.stack { display: flex; flex-direction: column; }
.stack button { height: 23px; gap: 4px; }
.g-clip .stack { width: 62px; }
.g-edit .stack { width: 86px; }
.stack .far { margin-right: 4px; }
.line { display: flex; align-items: center; height: 23px; }
.line button { height: 23px; justify-content: center; flex: none; }
.line .sel, .views .sel { background: #c5c5c5; }
.line .b20 { width: 20px; }
.line .b22 { width: 22px; }
.line .b24 { width: 24px; }
.drop { width: 12px; }
.bar { width: 1px; height: 23px; background: #d4d4d4; margin: 0 5px; flex: none; }
.pair { display: flex; width: 43px; margin-left: -1px; }
.line .wide { gap: 4px; flex: 1; justify-content: flex-start; padding-right: 9px; }
.bold { font-weight: 700; }
.line .ital { font: italic 700 14px/16px "Liberation Serif", serif; }
.under { font-weight: 700; text-decoration: underline; text-underline-offset: 2px; }
.combo { display: grid; grid-template-columns: 1fr 14px; height: 23px; background: #fff; border: 1px solid #c6c6c6; align-items: center; flex: none; }
.combo select { grid-area: 1 / 1 / 2 / 3; appearance: none; border: 0; background: none; font: inherit; color: #444; padding: 0 2px; height: 21px; width: 100%; }
.combo .caret { grid-area: 1 / 2; justify-self: center; pointer-events: none; }
.c-font { width: 156px; }
.c-size { width: 41px; margin-left: -1px; }
.c-num { width: 131px; }
.gallery { display: flex; width: 335px; height: 62px; margin: 2px 0 0 2px; border: 1px solid #b4b4b4; background: #fff; }
.cells { flex: 1; display: grid; grid-template-columns: repeat(3, 100px); gap: 6px; padding: 5px 3px; }
.cells button { font-size: 14px; color: #222; padding-left: 5px; height: 22px; }
.cells .pink { background: #ff99cc; color: #8b1a8b; }
.cells .lime { background: #ccffcc; color: #2b7a2b; }
.cells .bad { background: #ffc7ce; color: #9c0006; }
.cells .good { background: #c6efce; color: #1d6b1d; }
.cells .current { outline: 3px solid #c0c0c0; }
.gscroll { width: 14px; border-left: 1px solid #b4b4b4; display: flex; flex-direction: column; }
.gscroll button { flex: 1; flex-direction: column; justify-content: center; gap: 2px; }
.gscroll button + button { border-top: 1px solid #b4b4b4; }
.gscroll .off { background: #e6e6e6; }
.gscroll .off .caret { border-bottom-color: #bbb; }
.more { width: 7px; height: 1px; background: #666; }
.collapse { margin: 78px 5px 0 auto; }

.quick { flex: none; display: flex; align-items: center; height: 45px; padding: 0 0 10px 18px; }
.quick span { display: flex; align-items: center; gap: 8px; }
.quick > :nth-child(2) { margin-left: 35px; }
.quick > :nth-child(3) { margin-left: 22px; }
.quick > :nth-child(4) { margin-left: 24px; }
.quick > :nth-child(5) { margin-left: 38px; }

.formula { flex: none; display: flex; align-items: center; height: 38px; padding: 0 0 10px 5px; }
.namebox, .fxbox, .fbar { height: 28px; background: #fdfdfd; border: 1px solid #c6c6c6; display: flex; align-items: center; }
.namebox { width: 124px; padding: 0 5px 0 6px; font-size: 14px; }
.namebox input { flex: 1; }
.formula .dots { margin: 0 15px 0 14px; }
.fxbox { width: 110px; justify-content: space-between; padding: 0 11px; }
.fbar { flex: 1; margin-left: 3px; padding-right: 4px; }
.fbar input { flex: 1; }

.sheet { flex: 1; min-height: 0; display: flex; }
.grid { flex: 1; position: relative; overflow: hidden; border-right: 1px solid #999; background: #fff; }
table { width: 100%; table-layout: fixed; border-collapse: separate; border-spacing: 0; }
.k-num { width: 23px; }
.k-a { width: 258px; }
.k-b { width: 232px; }
.k-c { width: 156px; }
th { padding: 0; font-weight: 400; font-size: 11px; background: #e6e6e6; color: #333; border: 0 solid #b4b4b4; border-width: 0 1px 1px 0; }
thead th { height: 16px; line-height: 14px; border-bottom-color: #999; }
thead .tail { border-right: 0; }
tbody th { vertical-align: bottom; line-height: 12px; }
th.act { background: #d2d2d2; color: #217346; }
thead th.act { border-bottom: 2px solid #217346; line-height: 13px; }
.corner i { display: block; margin: 2px 2px 0 auto; width: 0; border: 4px solid #b8b8b8; border-top-color: transparent; border-left-color: transparent; }
td { height: 41px; padding: 2px 0 0; text-align: center; font-size: 15px; line-height: 20px; font-weight: 300; color: #000; background: #fff; border: 0 solid #d0d0d0; border-width: 0 1px 1px 0; white-space: nowrap; }
td:last-child { border-right: 0; }
.ants {
  position: absolute; left: 22px; top: 16px; width: 1739px; height: 41px;
  --h: repeating-linear-gradient(90deg, #3c6b50 0 5px, #fff 5px 7px);
  --v: repeating-linear-gradient(#3c6b50 0 5px, #fff 5px 7px);
  background: var(--h) top / 100% 2px no-repeat, var(--h) bottom / 100% 2px no-repeat, var(--v) left / 2px 100% no-repeat, var(--v) right / 2px 100% no-repeat;
}
.picked { position: absolute; left: 22px; top: 96px; width: 260px; height: 44px; border: 2px solid #217346; }
.vscroll { width: 16px; display: flex; flex-direction: column; padding: 2px 0 0 3px; }
.vscroll button { height: 15px; justify-content: center; background: #fff; border: 1px solid #b4b4b4; }
.track { flex: 1; background: #d9d9d9; }
.thumb { height: 28px; background: #fff; border: 1px solid #b4b4b4; }

.sheets { flex: none; display: flex; height: 28px; border-top: 1px solid #999; border-bottom: 1px solid #c6c6c6; font-size: 13px; padding-bottom: 3px; }
.arrows { width: 100px; display: flex; align-items: center; padding-left: 27px; gap: 24px; }
.sheets > button { border-left: 1px solid #999; padding: 0 12px 1px 11px; }
.sheets .hl { padding: 2px 2px 0 2px; color: #111; }
.hl span { height: 22px; line-height: 19px; padding: 0 11px; display: block; font-weight: 500; }
.sheets .hl .orange { padding: 0 10px; }
.blue { background: #bdd7ee; }
.orange { background: #f4b084; }
.sheets .open { background: #fff; color: #217346; border: 0; border-right: 1px solid #999; border-bottom: 2px solid #217346; margin-top: -1px; padding: 2px 13px 0; }
.sheets .add { border: 0; padding: 0; margin-left: 32px; }
.sheets > .dots { margin: 7px 15px 0 auto; }
.hscroll { width: 689px; height: 15px; margin: 6px 15px 0 0; display: flex; }
.hscroll button { width: 15px; justify-content: center; background: #fff; border: 1px solid #aaa; }
.hscroll div { flex: 1; background: #fff; border: 1px solid #aaa; }

.status { flex: none; height: 22px; display: flex; align-items: center; background: #f1f1f1; padding: 0 0 1px 7px; }
.views { display: flex; margin-left: auto; height: 21px; }
.views button { width: 38px; justify-content: center; }
.zoom { display: flex; align-items: center; padding: 0 15px 0 6px; }
.zoom button { width: 12px; justify-content: center; font-weight: 700; font-size: 14px; }
.zoom input { appearance: none; width: 100px; height: 12px; background: linear-gradient(#999, #999) center / 100% 1px no-repeat; }
.zoom input::-webkit-slider-thumb { appearance: none; width: 4px; height: 11px; background: #555; }
.zoom span { margin-left: 14px; }

.mark { position: absolute; right: 10px; bottom: 6px; display: flex; align-items: center; gap: 2px; opacity: 0.8; pointer-events: none; }
.mark div { display: flex; flex-direction: column; }
.mark b { font-size: 21px; line-height: 21px; color: #5c9fd8; font-weight: 700; text-shadow: 0 0 2px #fff; }
.mark em { font: 17px/19px "Liberation Sans", sans-serif; color: #3fa65a; }

.mini { position: absolute; left: 159px; top: 289px; width: 270px; height: 56px; padding: 3px 3px; background: #fff; border: 1px solid #c6c6c6; box-shadow: 1px 2px 3px #0003; }
.mini .line + .line { height: 25px; }
.mini .line .sel { height: 25px; }
.m-font { width: 69px; }
.m-size { width: 50px; margin-left: -1px; }

.menu { position: absolute; left: 159px; top: 360px; width: 208px; padding: 1px; background: #fff; border: 1px solid #c6c6c6; box-shadow: 2px 2px 3px #0004; }
.item { width: 100%; height: 25px; display: flex; align-items: center; color: #555; }
.item.off { color: #b1b1b1; }
.gut { width: 31px; padding-left: 4px; flex: none; }
.item .sub { margin-left: auto; padding-right: 8px; }
.item .sub.split { border-left: 1px solid #ddd; padding: 2px 8px 2px 10px; }
.item.head { height: 24px; }
.head .gut { width: 25px; }
.head strong { flex: 1; height: 24px; line-height: 24px; background: #e8e8e8; padding-left: 8px; font-weight: 500; }
.pastes { display: flex; gap: 8px; height: 31px; padding: 4px 0 0 30px; align-items: flex-start; }
.menu hr { margin: 0 0 0 31px; border: 0; height: 2px; border-top: 1px solid #e1e1e1; }

.arrow { position: absolute; left: 148px; top: 347px; filter: drop-shadow(2px 3px 2px #0007); pointer-events: none; }
.cursor { position: absolute; left: 300px; top: 419px; pointer-events: none; }
</style>
